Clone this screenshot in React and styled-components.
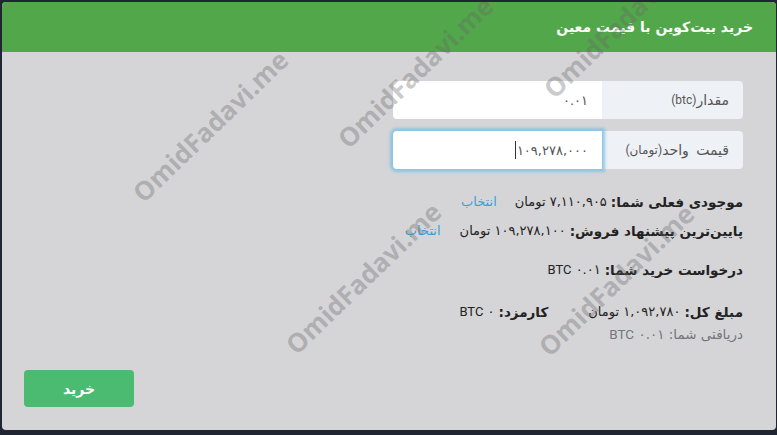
import React from "react";
import styled, { createGlobalStyle } from "styled-components";

const GlobalStyle = createGlobalStyle`
  html, body {
    margin: 0;
    padding: 0;
    background: #202533;
  }
  * {
    box-sizing: border-box;
  }
`;

const fa = `"DejaVu Sans", "Noto Sans", sans-serif`;

const Page = styled.div`
  width: 777px;
  height: 435px;
  padding: 2px 1px 5px 2px;
`;

const Card = styled.div`
  position: relative;
  width: 774px;
  height: 428px;
  background: #d5d5d7;
  border-radius: 4px;
  overflow: hidden;
  display: flex;
  flex-direction: column;
  direction: rtl;
  font-family: ${fa};
`;

const Header = styled.div`
  height: 50px;
  background: #52a74a;
  display: flex;
  align-items: center;
  padding: 0 23px 1px;
`;

const Title = styled.h3`
  margin: 0;
  color: #fff;
  font-size: 14px;
  font-weight: bold;
`;

const Body = styled.div`
  flex: 1;
  display: flex;
  flex-direction: column;
  padding: 29px 33px 23px 22px;
`;

const FieldGroup = styled.div`
  width: 350px;
  height: 38px;
  display: flex;
  margin-bottom: ${(p) => p.$gap || 0}px;
`;

const Addon = styled.div`
  width: 141px;
  background: #eef1f5;
  border-radius: 0 4px 4px 0;
  display: flex;
  align-items: center;
  padding-right: 14px;
  color: #555;
  font-size: 14px;
  word-spacing: 3px;
  small {
    font-size: 12px;
    word-spacing: 0;
    font-family: "Roboto", ${fa};
  }
`;

const Input = styled.div`
  flex: 1;
  background: #fff;
  border-radius: 4px 0 0 4px;
  display: flex;
  align-items: center;
  padding-right: 14px;
  color: #555;
  font-size: 13px;
  position: relative;
  box-shadow: ${(p) =>
    p.$focus ? "0 0 0 1px #8cc8e4, 0 0 3px 3px rgba(120, 190, 225, 0.75)" : "none"};
  z-index: ${(p) => (p.$focus ? 1 : 0)};
`;

const Caret = styled.span`
  display: inline-block;
  width: 1px;
  height: 18px;
  background: #333;
  margin-right: 1px;
`;

const Line = styled.div`
  margin-top: ${(p) => p.$top}px;
  line-height: ${(p) => p.$lh || 22}px;
  font-size: ${(p) => p.$size || 13}px;
  color: ${(p) => (p.$muted ? "#75757c" : "#222")};
  white-space: nowrap;
  display: flex;
`;

const Label = styled.b`
  font-weight: bold;
  font-size: 13.5px;
  margin-left: 4px;
`;

const Latin = styled.span`
  font-family: "Roboto", sans-serif;
`;

const Pick = styled.a`
  color: #3aa0dc;
  margin-right: ${(p) => p.$gap}px;
  cursor: pointer;
`;

const Spacer = styled.span`
  display: inline-block;
  width: ${(p) => p.$w}px;
`;

const Footer = styled.div`
  margin-top: auto;
  display: flex;
  justify-content: flex-end;
`;

const BuyButton = styled.button`
  width: 110px;
  height: 37px;
  border: 0;
  border-radius: 4px;
  background: #4cbb72;
  color: #fff;
  font-family: ${fa};
  font-size: 14px;
  font-weight: bold;
  cursor: pointer;
`;

const Watermark = styled.div`
  position: absolute;
  left: ${(p) => p.$x}px;
  top: ${(p) => p.$y}px;
  transform: translate(-50%, -50%) rotate(-44deg);
  direction: ltr;
  font-family: "Open Sans", sans-serif;
  font-weight: bold;
  font-size: 26px;
  color: rgba(105, 105, 108, 0.37);
  white-space: nowrap;
  pointer-events: none;
  z-index: 5;
`;

const marks = [
  [208, 124],
  [413, 70],
  [619, 20],
  [361, 276],
  [614, 278],
];

export default function App() {
  return (
    <>
      <GlobalStyle />
      <Page>
        <Card>
          <Header>
            <Title>خرید بیت‌کوین با قیمت معین</Title>
          </Header>
          <Body>
            <FieldGroup $gap={12}>
              <Addon>
                مقدار<small>(btc)</small>
              </Addon>
              <Input>۰.۰۱</Input>
            </FieldGroup>
            <FieldGroup>
              <Addon>
                قیمت واحد<small>(تومان)</small>
              </Addon>
              <Input $focus>
                ۱۰۹,۲۷۸,۰۰۰
                <Caret />
              </Input>
            </FieldGroup>

            <Line $top={22}>
              <Label>موجودی فعلی شما:</Label>
              <span>۷,۱۱۰,۹۰۵ تومان</span>
              <Pick $gap={18}>انتخاب</Pick>
            </Line>
            <Line $top={7}>
              <Label>پایین‌ترین پیشنهاد فروش:</Label>
              <span>۱۰۹,۲۷۸,۱۰۰ تومان</span>
              <Pick $gap={19}>انتخاب</Pick>
            </Line>
            <Line $top={17}>
              <Label>درخواست خرید شما:</Label>
              <span>
                ۰.۰۱ <Latin>BTC</Latin>
              </span>
            </Line>
            <Line $top={20}>
              <Label>مبلغ کل:</Label>
              <span>۱,۰۹۲,۷۸۰ تومان</span>
              <Spacer $w={40} />
              <Label>کارمزد:</Label>
              <span>
                ۰ <Latin>BTC</Latin>
              </span>
            </Line>
            <Line $top={1} $lh={20} $size={13.5} $muted>
              <span>
                دریافتی شما: ۰.۰۱ <Latin>BTC</Latin>
              </span>
            </Line>

            <Footer>
              <BuyButton>خرید</BuyButton>
            </Footer>
          </Body>
          {marks.map(([x, y], i) => (
            <Watermark key={i} $x={x} $y={y}>
              OmidFadavi.me
            </Watermark>
          ))}
        </Card>
      </Page>
    </>
  );
}
